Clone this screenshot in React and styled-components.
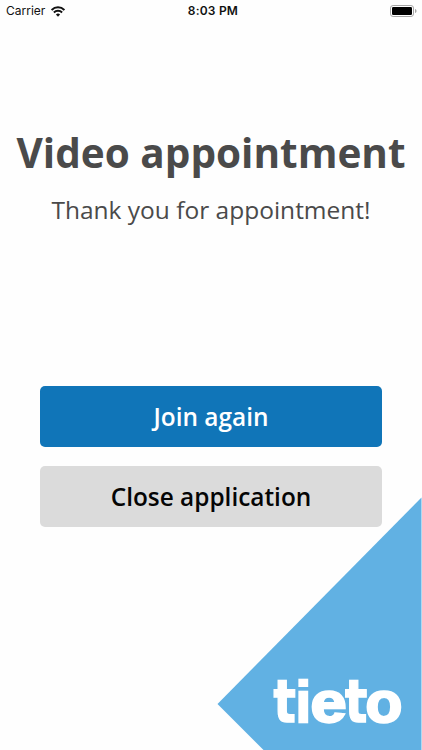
import React from 'react';
import styled, {createGlobalStyle} from 'styled-components';

const GlobalStyle = createGlobalStyle`
  * { box-sizing: border-box; }
  body {
    margin: 0;
    background: #fefefe;
    overflow: hidden;
  }
`;

const Screen = styled.div`
  position: relative;
  width: 422px;
  height: 750px;
  overflow: hidden;
  background: #fefefe;
  font-family: "Open Sans", "Noto Sans", sans-serif;
  color: #4a4a4a;
`;

const StatusBar = styled.header`
  display: grid;
  grid-template-columns: 1fr auto 1fr;
  align-items: center;
  height: 22px;
  padding: 0 5px 0 6px;
  font: 400 12px/22px Inter, sans-serif;
  color: #111;
`;

const Network = styled.div`
  display: flex;
  align-items: center;
  gap: 6px;
`;

const Clock = styled.span`
  padding-left: 3px;
  font-weight: 600;
  letter-spacing: 0.2px;
`;

const Battery = styled.svg`
  justify-self: end;
`;

const Heading = styled.div`
  padding-top: 100px;
  text-align: center;
  white-space: nowrap;
`;

const Title = styled.h1`
  margin: 0;
  font-size: 40.5px;
  font-weight: 700;
  line-height: 61px;
`;

const Message = styled.p`
  margin: 0;
  font-size: 24.5px;
  line-height: 53px;
`;

const Actions = styled.div`
  position: relative;
  z-index: 1;
  display: flex;
  flex-direction: column;
  gap: 19px;
  padding: 150px 40px 0;
`;

const Button = styled.button`
  height: 61px;
  padding: 0;
  border: 0;
  border-radius: 5px;
  background: ${props => (props.$primary ? '#1075b8' : '#dbdbdb')};
  color: ${props => (props.$primary ? '#fff' : '#050505')};
  font: 600 24.4px/61px "Open Sans", "Noto Sans", sans-serif;
`;

const Brand = styled.svg`
  position: absolute;
  right: 0;
  bottom: 0;
  font: 700 58px "Liberation Sans", Arial, sans-serif;
`;

const LetterT = styled.text`
  font: 700 59px "DejaVu Sans", sans-serif;
  stroke-width: 1.5px;
`;

const WifiIcon = () => (
  <svg width="14" height="11" viewBox="0 0 14 11" fill="none" stroke="#111" strokeWidth="2">
    <path d="M0.6 4a9 9 0 0 1 12.800 0" />
    <path d="M2.900 6.500a5.800 5.800 0 0 1 8.200 0" />
    <path d="M7 10.700L4.900 8.600a3 3 0 0 1 4.200 0z" fill="#111" stroke="none" />
  </svg>
);

const BatteryIcon = () => (
  <Battery width="27" height="12" viewBox="0 0 27 12">
    <rect x="0.5" y="0.5" width="23" height="11" rx="2.6" fill="#fff" stroke="#a5a5a5" />
    <rect x="2" y="2" width="20" height="8" rx="1.2" fill="#000" />
    <path d="M25 4v4c1-.4 1.5-1.1 1.5-2S26 4.400 25 4z" fill="#a5a5a5" />
  </Battery>
);

const Logo = () => (
  <Brand width="206" height="253" viewBox="0 0 206 253" aria-label="tieto">
    <path d="M205.500 0.500V253H47.500L1.500 207z" fill="#61b1e3" />
    <g fill="#fff" stroke="#fff" strokeWidth="2.4">
      <LetterT transform="translate(57.6 225.300) scale(0.79 1)">t</LetterT>
      <text transform="translate(79.8 224.700) scale(0.94 1)">i</text>
      <text transform="translate(94.4 224.700) scale(1.12 1)">e</text>
      <LetterT transform="translate(129 225.300) scale(0.79 1)">t</LetterT>
      <text transform="translate(149.4 224.700) scale(1.04 1)">o</text>
    </g>
  </Brand>
);

const App = () => (
  <Screen>
    <GlobalStyle />
    <StatusBar>
      <Network>
        <span>Carrier</span>
        <WifiIcon />
      </Network>
      <Clock>8:03 PM</Clock>
      <BatteryIcon />
    </StatusBar>
    <Heading>
      <Title>Video appointment</Title>
      <Message>Thank you for appointment!</Message>
    </Heading>
    <Actions>
      <Button type="button" $primary>Join again</Button>
      <Button type="button">Close application</Button>
    </Actions>
    <Logo />
  </Screen>
);

export default App;
